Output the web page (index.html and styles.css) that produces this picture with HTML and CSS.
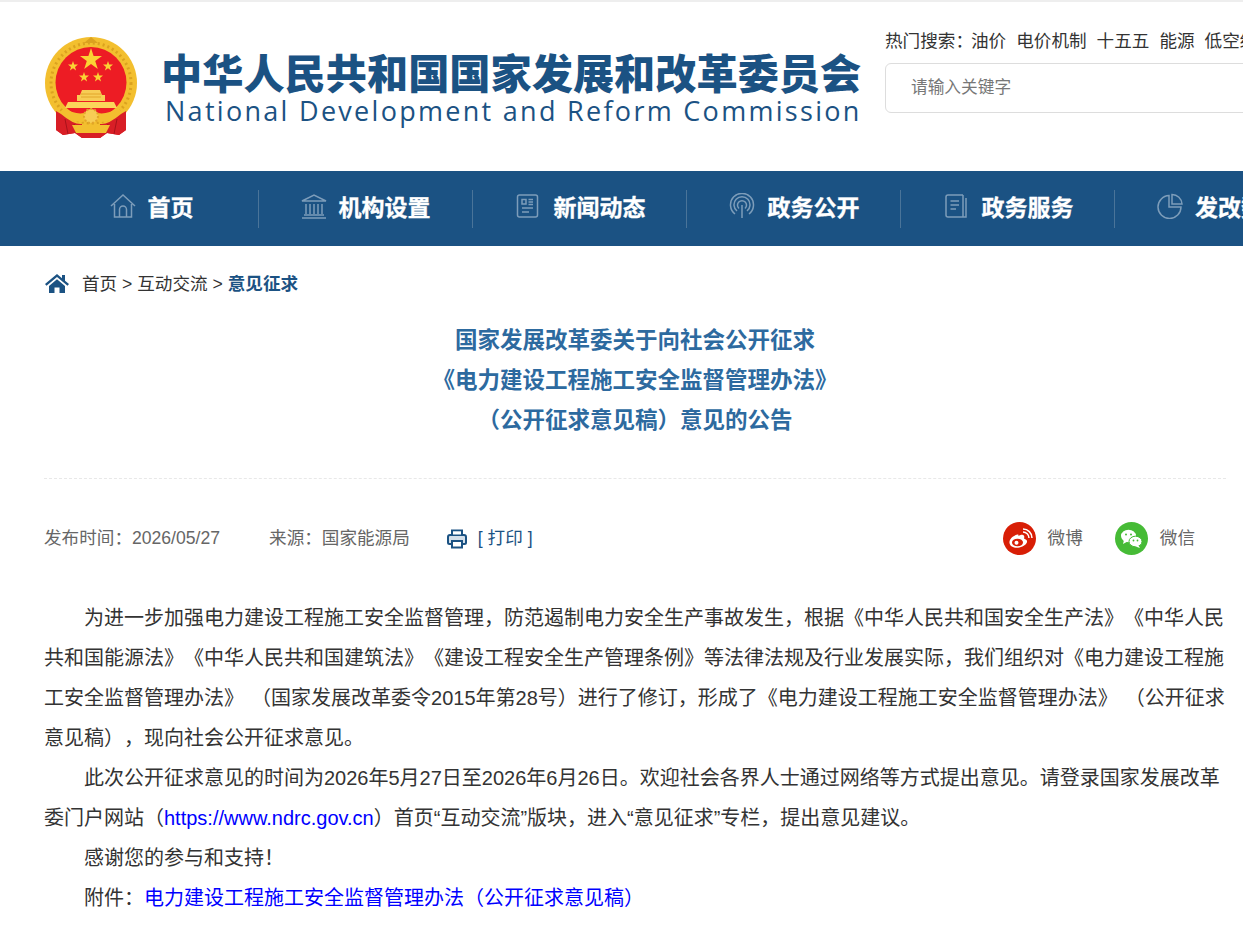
FILE: index.html
```html
<!DOCTYPE html>
<html lang="zh-CN">
<head>
    <meta charset="UTF-8">
    <title>国家发展改革委关于向社会公开征求《电力建设工程施工安全监督管理办法》（公开征求意见稿）意见的公告</title>
    <link rel="stylesheet" href="styles.css">
</head>
<body>

<header class="header">
    <div class="logo">
        <svg class="emblem" width="94" height="104" viewBox="0 0 94 104">
            <!-- ribbon back -->
            <path d="M11 72 H81 V93 L74 98 L62 96 L55 101 H37 L30 96 L18 98 L11 93 Z" fill="#d81e26"/>
            <circle cx="46" cy="46" r="46" fill="#f3bf2f"/>
            <circle cx="46" cy="46" r="40" fill="none" stroke="#dba21f" stroke-width="3" stroke-dasharray="2 3"/>
            <path d="M46 0 L39 6 H53 Z" fill="#dba21f"/>
            <circle cx="46" cy="45.500" r="35.500" fill="#ed1c24"/>
            <polygon points="46,11 48.600,19 57,19 50.200,24 52.800,32 46,27 39.200,32 41.800,24 35,19 43.400,19" fill="#fbd334"/>
            <polygon points="28,24 29.200,27.600 33,27.600 30,29.900 31.100,33.500 28,31.300 24.900,33.500 26,29.900 23,27.600 26.800,27.600" fill="#fbd334"/>
            <polygon points="63,24 64.200,27.600 68,27.600 65,29.900 66.100,33.500 63,31.300 59.900,33.500 61,29.900 58,27.600 61.800,27.600" fill="#fbd334"/>
            <polygon points="39,35 40.200,38.600 44,38.600 41,40.900 42.100,44.500 39,42.300 35.900,44.500 37,40.900 34,38.600 37.800,38.600" fill="#fbd334"/>
            <polygon points="53,35 54.200,38.600 58,38.600 55,40.900 56.100,44.500 53,42.300 49.900,44.500 51,40.900 48,38.600 51.800,38.600" fill="#fbd334"/>
            <!-- gate and platform -->
            <path d="M32 64 V58 H35 L37 53 H55 L57 58 H60 V64 Z" fill="#f7cd55"/>
            <path d="M36 57 H56 M36 60 H56" stroke="#e2a52b" fill="none"/>
            <path d="M20 71 H72 L69 65 H23 Z" fill="#fbd65a"/>
            <path d="M19 71 Q33 80 46 74 Q59 80 73 71 L78 76 Q62 89 46 83 Q30 89 14 76 Z" fill="#f3bf2f"/>
            <circle cx="46" cy="79" r="7" fill="#f7cd55" stroke="#e2a52b" stroke-width="2" stroke-dasharray="2 2"/>
            <!-- ribbon front -->
            <path d="M11 74 L16 77 Q29 88 37 87 V93 H55 V87 Q63 88 76 77 L81 74 V93 L74 98 L62 96 L55 101 H37 L30 96 L18 98 L11 93 Z" fill="#d81e26"/>
            <path d="M20 82 L23 97 M29 87 L31 96 M72 82 L69 97 M63 87 L61 96" stroke="#a8121a" fill="none"/>
            <path d="M27 88 H65 L61 96 H31 Z" fill="#f3bf2f"/>
        </svg>
        <div class="logo-text">
            <div class="logo-cn">中华人民共和国国家发展和改革委员会</div>
            <div class="logo-en">National Development and Reform Commission</div>
        </div>
    </div>
    <div class="search">
        <div class="hot">
            <span class="hot-label">热门搜索：</span>
            <a href="#">油价</a>
            <a href="#">电价机制</a>
            <a href="#">十五五</a>
            <a href="#">能源</a>
            <a href="#">低空经济</a>
        </div>
        <input class="search-input" type="text" placeholder="请输入关键字">
    </div>
</header>

<nav class="nav">
    <a class="nav-item" href="#">
        <svg class="nav-icon" width="26" height="26" viewBox="0 0 26 26">
            <path d="M1 13 L13 2 L25 13 M4.500 11 V24 H21.500 V11 M9.500 24 V16.500 A3.500 3.500 0 0 1 16.500 16.500 V24"/>
        </svg>
        首页
    </a>
    <a class="nav-item" href="#">
        <svg class="nav-icon" width="26" height="26" viewBox="0 0 26 26">
            <path d="M1 8 L13 2 L25 8 Z M5 11 V21 M9 11 V21 M13 11 V21 M17 11 V21 M21 11 V21 M3 22 H23 M1 25 H25"/>
        </svg>
        机构设置
    </a>
    <a class="nav-item" href="#">
        <svg class="nav-icon" width="28" height="26" viewBox="0 0 28 26">
            <rect x="3.500" y="2" width="20" height="22" rx="2"/>
            <path d="M8 6.500 H12 V11 H8 Z M14.500 6.500 H19 M14.500 9 H19 M14.500 11.500 H19 M8 15 H19 M8 19 H15"/>
        </svg>
        新闻动态
    </a>
    <a class="nav-item" href="#">
        <svg class="nav-icon" width="28" height="26" viewBox="0 0 28 26">
            <path d="M7 21 A11.500 11.500 0 1 1 21 21 M9 18 A8 8 0 1 1 19 18 M11 15.500 A4.500 4.500 0 1 1 17 15.500 M14 12 V25"/>
        </svg>
        政务公开
    </a>
    <a class="nav-item" href="#">
        <svg class="nav-icon" width="28" height="26" viewBox="0 0 28 26">
            <path d="M21 2 H6 A2 2 0 0 0 4 4 V22 A2 2 0 0 0 6 24 H24 V5 M21 2 V24 M8.500 8 H17 M8.500 12 H17 M8.500 16 H14"/>
        </svg>
        政务服务
    </a>
    <a class="nav-item" href="#">
        <svg class="nav-icon" width="26" height="26" viewBox="0 0 26 26">
            <path d="M12 2.500 A11.500 11.500 0 1 0 24 14 H12 Z M15 1.500 A10 10 0 0 1 25 11 H15 Z"/>
        </svg>
        发改数据
    </a>
</nav>

<main class="main">
    <div class="crumbs">
        <svg class="crumb-icon" width="24" height="20" viewBox="0 0 24 20">
            <path d="M12 1 L17 5.200 V2 H20 V7.700 L24 11 L22.500 12.800 L12 4 L1.500 12.800 L0 11 Z M4 13 L12 6.200 L20 13 V20 H14.500 V14.500 H9.500 V20 H4 Z" fill="#1b5283"/>
        </svg>
        <span class="crumb-text"><a href="#">首页</a> &gt; <a href="#">互动交流</a> &gt; <b>意见征求</b></span>
    </div>

    <h1 class="title">
        国家发展改革委关于向社会公开征求<br>
        《电力建设工程施工安全监督管理办法》<br>
        （公开征求意见稿）意见的公告
    </h1>

    <div class="meta">
        <span class="meta-text meta-date">发布时间：2026/05/27</span>
        <span class="meta-text">来源：国家能源局</span>
        <a class="print" href="#">
            <svg class="print-icon" width="20" height="20" viewBox="0 0 20 20">
                <path d="M5 6 V1.500 H15 V6 M5 15 H2.500 A1.500 1.500 0 0 1 1 13.500 V8 A2 2 0 0 1 3 6 H17 A2 2 0 0 1 19 8 V13.500 A1.500 1.500 0 0 1 17.500 15 H15" fill="#d5e0ea" stroke="#1b5283" stroke-width="2"/>
                <rect x="5" y="12" width="10" height="6.500" fill="#fff" stroke="#1b5283" stroke-width="2"/>
                <rect x="6" y="2.500" width="8" height="3" fill="#fff"/>
            </svg>
            <span class="meta-text">[ 打印 ]</span>
        </a>
        <div class="share">
            <a class="share-item" href="#">
                <svg width="33" height="33" viewBox="0 0 33 33">
                    <circle cx="16.500" cy="16.500" r="16.500" fill="#d81e06"/>
                    <path d="M14.500 12.500 C9 14 6 18 6.500 21 C7 25 12 26.500 16.500 25.500 C21 24.500 24.500 21.500 24 19 C23.700 17.500 22 17 21 16.500 C21.500 15 21.500 13.500 20 13 C18.500 12.500 16.500 13.500 15.500 14 C15.500 13 15.500 12.200 14.500 12.500 Z" fill="#fff"/>
                    <ellipse cx="14.500" cy="20.500" rx="5.500" ry="3.800" fill="#d81e06"/>
                    <circle cx="13.500" cy="20.800" r="2" fill="#fff"/>
                    <path d="M20 10 A6 6 0 0 1 26 16 M20 7 A9 9 0 0 1 29 16" fill="none" stroke="#fff" stroke-width="1.500"/>
                </svg>
                <span class="meta-text">微博</span>
            </a>
            <a class="share-item" href="#">
                <svg width="33" height="33" viewBox="0 0 33 33">
                    <circle cx="16.500" cy="16.500" r="16.500" fill="#46bb36"/>
                    <ellipse cx="13.500" cy="14" rx="7.500" ry="6.200" fill="#fff"/>
                    <path d="M9 18 L8 22 L12.500 19.500 Z" fill="#fff"/>
                    <ellipse cx="20.500" cy="19.500" rx="6.500" ry="5.300" fill="#fff" stroke="#46bb36"/>
                    <path d="M23.500 23.500 L25 26 L20.500 24.500 Z" fill="#fff"/>
                    <circle cx="11" cy="12.500" r="1" fill="#46bb36"/>
                    <circle cx="16" cy="12.500" r="1" fill="#46bb36"/>
                    <circle cx="18.500" cy="18.500" r=".9" fill="#46bb36"/>
                    <circle cx="22.500" cy="18.500" r=".9" fill="#46bb36"/>
                </svg>
                <span class="meta-text">微信</span>
            </a>
        </div>
    </div>

    <div class="article">
        <p>为进一步加强电力建设工程施工安全监督管理，防范遏制电力安全生产事故发生，根据《中华人民共和国安全生产法》《中华人民共和国能源法》《中华人民共和国建筑法》《建设工程安全生产管理条例》等法律法规及行业发展实际，我们组织对《电力建设工程施工安全监督管理办法》 （国家发展改革委令2015年第28号）进行了修订，形成了《电力建设工程施工安全监督管理办法》 （公开征求意见稿），现向社会公开征求意见。</p>
        <p>此次公开征求意见的时间为2026年5月27日至2026年6月26日。欢迎社会各界人士通过网络等方式提出意见。请登录国家发展改革委门户网站（<a href="#">https://www.ndrc.gov.cn</a>）首页“互动交流”版块，进入“意见征求”专栏，提出意见建议。</p>
        <p>感谢您的参与和支持！</p>
        <p>附件：<a href="#">电力建设工程施工安全监督管理办法（公开征求意见稿）</a></p>
    </div>
</main>

</body>
</html>
```

FILE: styles.css
```css
* {
    box-sizing: border-box;
}
html, body {
    overflow-x: hidden;
}
body {
    margin: 0;
    font-family: "Liberation Sans", "Noto Sans CJK SC", sans-serif;
    color: #333;
    background: white;
    border-top: 2px solid #eee;
    text-spacing-trim: space-all;
}
a {
    color: inherit;
    text-decoration: none;
}

/* header */
.header {
    display: flex;
    height: 169px;
    padding-left: 45px;
    overflow: hidden;
}
.logo {
    display: flex;
    align-items: flex-start;
    width: 840px;
    flex-shrink: 0;
    padding-top: 35px;
}
.emblem {
    flex-shrink: 0;
}
.logo-text {
    margin-left: 24px;
    padding-top: 17px;
    color: #1b5283;
    white-space: nowrap;
}
.logo-cn {
    font-size: 41.200px;
    line-height: 42px;
    font-weight: 900;
    margin-left: -2px;
}
.logo-en {
    font-family: "Open Sans", sans-serif;
    font-size: 27px;
    line-height: 30px;
    letter-spacing: 2.290px;
    margin-left: 2px;
}
.search {
    flex-shrink: 0;
    padding-top: 27px;
}
.hot {
    display: flex;
    height: 34px;
    font-size: 17.600px;
    line-height: 24px;
    white-space: nowrap;
}
.hot-label {
    margin-right: -2px;
}
.hot a {
    margin-right: 10px;
}
.search-input {
    display: block;
    width: 420px;
    height: 50px;
    padding: 0 25px;
    border: 1px solid #ddd;
    border-radius: 6px;
    font-family: inherit;
    font-size: 16.700px;
    outline: none;
}
.search-input::placeholder {
    color: #777;
}

/* nav */
.nav {
    display: flex;
    align-items: center;
    height: 75px;
    padding-left: 45px;
    background-color: #1b5283;
    overflow: hidden;
}
.nav-item {
    display: flex;
    align-items: center;
    justify-content: center;
    gap: 12px;
    width: 214px;
    height: 38px;
    padding-bottom: 5px;
    flex-shrink: 0;
    border-right: 1px solid #4a7499;
    color: white;
    font-size: 23px;
    font-weight: 700;
    -webkit-text-stroke: .3px white;
    white-space: nowrap;
}
.nav-item:last-child {
    border-right: none;
}
.nav-icon {
    fill: none;
    stroke: #7d9dba;
    stroke-width: 1.500;
}

/* main */
.main {
    width: 1226px;
    padding-left: 44px;
}
.crumbs {
    display: flex;
    align-items: center;
    height: 20px;
    margin-top: 27px;
    margin-left: 1px;
    font-size: 17.600px;
}
.crumb-icon {
    margin-right: 13px;
}
.crumb-text {
    padding-bottom: 2px;
}
.crumbs b {
    color: #1b5283;
}
.title {
    margin: 28px 0 0;
    padding-bottom: 37px;
    border-bottom: 1px dashed #e8e8e8;
    color: #2d6a9f;
    font-size: 22.500px;
    line-height: 40px;
    font-weight: 700;
    text-align: center;
}
.meta {
    display: flex;
    align-items: center;
    height: 34px;
    margin-top: 42px;
    color: #666;
    font-size: 17.600px;
    white-space: nowrap;
}
.meta-text {
    padding-bottom: 4px;
}
.meta-date {
    margin-right: 49px;
}
.print {
    display: flex;
    align-items: center;
    gap: 11px;
    margin-left: 37px;
    color: #1b5283;
}
.print-icon {
    margin-top: 2px;
}
.share {
    display: flex;
    margin-left: auto;
    padding-right: 31px;
}
.share-item {
    display: flex;
    align-items: center;
    gap: 12px;
    margin-left: 32px;
}

/* article */
.article {
    margin-top: 43px;
    font-size: 20px;
    line-height: 40px;
    word-spacing: 1.500px;
}
.article p {
    margin: 0;
    text-indent: 2em;
}
.article a {
    color: blue;
}
```
